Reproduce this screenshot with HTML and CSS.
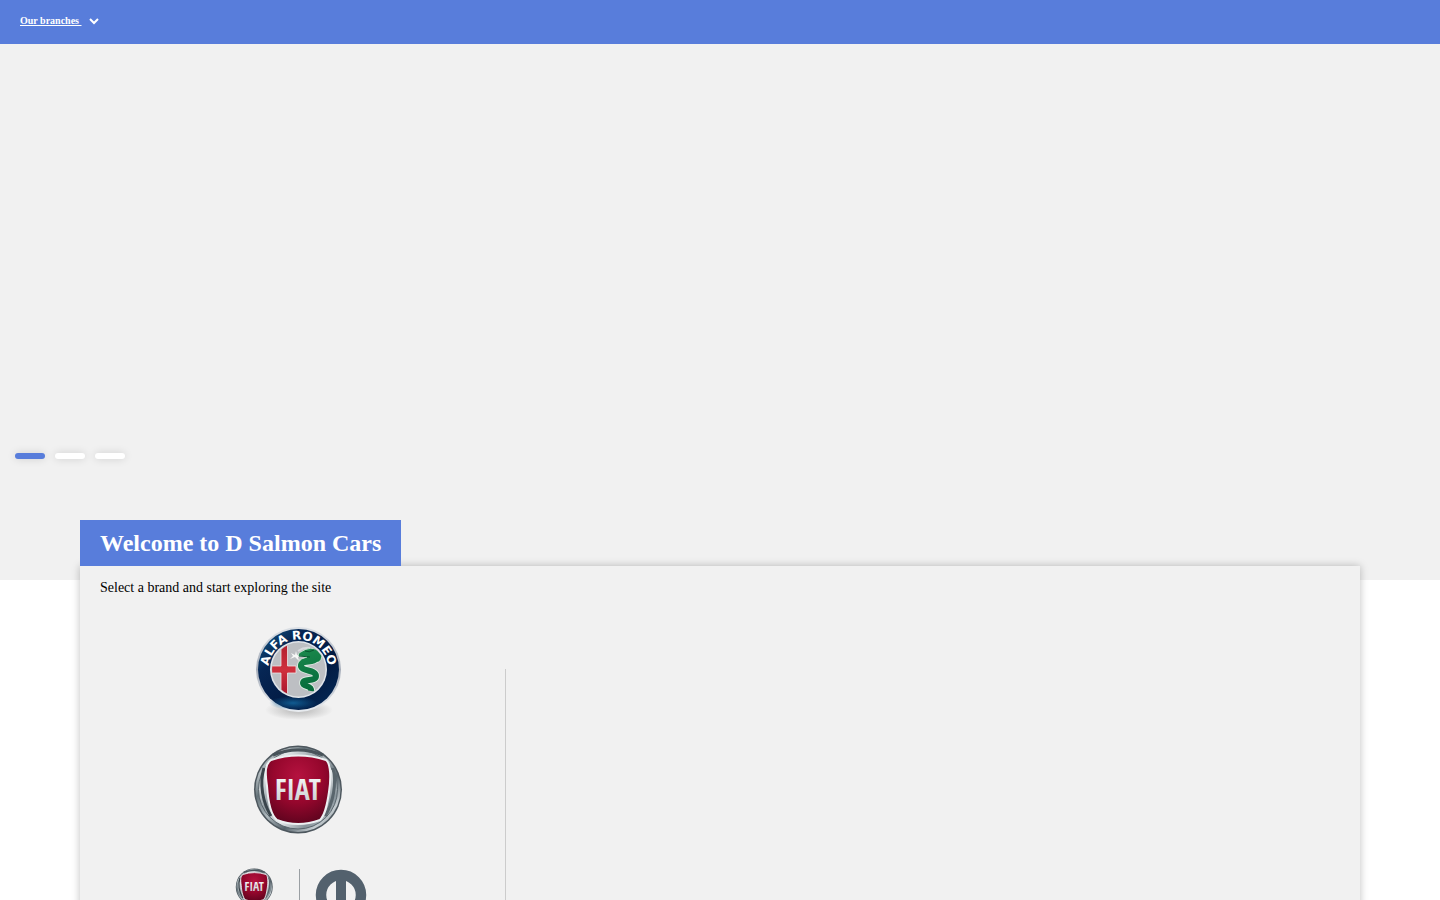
FILE: index.html
```html
<!DOCTYPE html>
<html lang="en">
<head>
<meta charset="utf-8">
<title>D Salmon Cars</title>
<link rel="stylesheet" href="styles.css">
</head>
<body>
<header class="topbar">
  <a class="branches" href="#branches"><span class="branches-label">Our branches&nbsp;</span><svg class="chevron" width="10" height="8" viewBox="0 0 10 8" aria-hidden="true"><path d="M1 2 5 6 9 2" fill="none" stroke="#fff" stroke-width="2"/></svg></a>
</header>
<section class="hero" aria-label="Promotions">
  <div class="slides">
    <button class="slide active" type="button" aria-label="Slide 1"></button>
    <button class="slide" type="button" aria-label="Slide 2"></button>
    <button class="slide" type="button" aria-label="Slide 3"></button>
  </div>
</section>
<main class="welcome">
  <h1 class="title">Welcome to D Salmon Cars</h1>
  <div class="panel">
    <p class="intro">Select a brand and start exploring the site</p>
    <div class="columns">
      <nav class="brands" aria-label="Brands">
        <a class="brand" href="#alfa">
          <svg width="110" height="110" viewBox="0 0 110 110" role="img" aria-label="Alfa Romeo">
            <defs>
              <linearGradient id="navy" x1="0" y1="0" x2="1" y2="1"><stop offset="0" stop-color="#05285a"/><stop offset=".12" stop-color="#0f4571"/><stop offset=".28" stop-color="#062654"/><stop offset=".65" stop-color="#021a42"/><stop offset="1" stop-color="#042b59"/></linearGradient>
              <radialGradient id="glow"><stop offset="0" stop-color="#12639a" stop-opacity=".9"/><stop offset="1" stop-color="#12639a" stop-opacity="0"/></radialGradient>
              <linearGradient id="silver" x1="0" y1="0" x2="0" y2="1"><stop offset="0" stop-color="#dde1e6"/><stop offset=".5" stop-color="#a5acb8"/><stop offset="1" stop-color="#e9edf1"/></linearGradient>
              <linearGradient id="red" x1="0" y1="0" x2="0" y2="1"><stop offset="0" stop-color="#b01e2d"/><stop offset=".5" stop-color="#cf303d"/><stop offset="1" stop-color="#a3112a"/></linearGradient>
              <linearGradient id="green" gradientUnits="userSpaceOnUse" x1="56" y1="32" x2="72" y2="78"><stop offset="0" stop-color="#1b8a4d"/><stop offset="1" stop-color="#04683a"/></linearGradient>
              <radialGradient id="shade"><stop offset=".3" stop-color="#aaa" stop-opacity=".6"/><stop offset="1" stop-color="#aaa" stop-opacity="0"/></radialGradient>
              <clipPath id="inner"><circle cx="53.500" cy="54.500" r="26.500"/></clipPath>
              <path id="ring" d="M35.500 78.500A30 30 0 1 1 71.500 78.500"/>
              <path id="serpent" d="M66 38Q75 39 71 44C68 48 57 45 56 50C55 57 71 54 71 61C71 67 58 63 58 68C58 72 67 70 66 76"/>
            </defs>
            <ellipse cx="54" cy="95" rx="34" ry="10" fill="url(#shade)"/>
            <circle cx="53.500" cy="54.500" r="42.500" fill="url(#silver)"/>
            <circle cx="53.500" cy="54.500" r="40.500" fill="url(#navy)"/>
            <ellipse cx="48" cy="88" rx="24" ry="7" fill="url(#glow)"/>
            <circle cx="53.500" cy="54.500" r="28.500" fill="#e0e4e9"/>
            <circle cx="53.500" cy="54.500" r="27" fill="#bdbfc3"/>
            <g clip-path="url(#inner)">
              <path d="M36 27v24H25v7h11v26h6.500V58H51v-7h-8.500V27z" fill="url(#red)" stroke="#eee4e4" stroke-width=".8"/>
              <path d="M46 38l4 2 1-4 1 4 6-1-5 3 1 4-4-4-5 2 3-3z" fill="#f7f7f7"/>
              <path d="M53 36q6-4 12-3" fill="none" stroke="#d8dadd" stroke-width="2"/>
              <use href="#serpent" fill="none" stroke="#dcebe1" stroke-width="7.800"/>
              <path d="M54 38Q67 29 75 37Q79 42 74 47L66 47 54 45 62 42 53 41z" fill="url(#green)" stroke="#dcebe1" stroke-width=".8"/>
              <use href="#serpent" fill="none" stroke="url(#green)" stroke-width="6"/>
              <path d="M54 41l11 1M60 36q4 2 9-1" fill="none" stroke="#0a5530"/>
            </g>
            <text class="alfa-word" text-anchor="middle"><textPath href="#ring" startOffset="50%">ALFA ROMEO</textPath></text>
          </svg>
        </a>
        <a class="brand" href="#fiat">
          <svg width="110" height="110" viewBox="0 0 110 110" role="img" aria-label="Fiat">
            <defs>
              <linearGradient id="chrome" x1="0" y1="0" x2="1" y2="1"><stop offset="0" stop-color="#59666d"/><stop offset=".18" stop-color="#b4bdc1"/><stop offset=".3" stop-color="#66747b"/><stop offset=".48" stop-color="#aeb8bd"/><stop offset=".65" stop-color="#56636b"/><stop offset=".82" stop-color="#c5cdd1"/><stop offset="1" stop-color="#505b62"/></linearGradient>
              <linearGradient id="rim" x1="0" y1="0" x2="1" y2="1"><stop offset="0" stop-color="#7d888e"/><stop offset=".2" stop-color="#e2e7e9"/><stop offset=".4" stop-color="#929da3"/><stop offset=".6" stop-color="#e6eaec"/><stop offset=".78" stop-color="#87939a"/><stop offset="1" stop-color="#d9dfe2"/></linearGradient>
              <radialGradient id="ruby" cx=".5" cy=".3" r=".7"><stop offset="0" stop-color="#b5123f"/><stop offset=".55" stop-color="#96072d"/><stop offset="1" stop-color="#61041f"/></radialGradient>
              <linearGradient id="steel" x1="0" y1="0" x2="0" y2="1"><stop offset="0" stop-color="#fff"/><stop offset="1" stop-color="#c2c7cc"/></linearGradient>
              <g id="fiat-badge">
                <circle cx="53" cy="54.500" r="44" fill="#4d575e"/>
                <circle cx="53" cy="54.500" r="42.500" fill="url(#chrome)"/>
                <circle cx="53" cy="54.500" r="39.500" fill="url(#rim)" stroke="#59656c"/>
                <path d="M28 20Q53 10 78 20" fill="none" stroke="#48535a" stroke-width="3"/>
                <path d="M19 33C14 49 18 68 26 81" fill="none" stroke="#3a454c" stroke-width="3"/>
                <path d="M88 33C92 49 88 68 80 81" fill="none" stroke="#59656c" stroke-width="3"/>
                <path d="M26 25Q53 16 81 25C86 29 86 44 84 57C82 71 80 80 75 85Q53 93 32 85C26 80 23 66 22 51C20 37 20 29 26 25z" fill="url(#ruby)" stroke="#edf0f2" stroke-width="2"/>
                <text x="53" y="65" class="fiat-word" text-anchor="middle">FIAT</text>
              </g>
            </defs>
            <use href="#fiat-badge"/>
          </svg>
        </a>
        <a class="brand" href="#professional">
          <svg width="160" height="80" viewBox="0 0 160 80" role="img" aria-label="Fiat and Mopar">
            <use href="#fiat-badge" transform="translate(12 9) scale(.42)"/>
            <path d="M79.500 14v58" stroke="#9a9fa3"/>
            <circle cx="121" cy="40" r="20" fill="none" stroke="#53616d" stroke-width="10.500"/>
            <path d="M116 18h10v44h-10z" fill="#53616d"/>
          </svg>
        </a>
      </nav>
      <div class="details"></div>
    </div>
  </div>
</main>
</body>
</html>
```
FILE: styles.css
```css
* { box-sizing: border-box; }

body {
  margin: 0;
  background: #fff;
  color: #000;
  font-family: "Liberation Serif", "Times New Roman", serif;
}

.topbar {
  display: flex;
  align-items: center;
  height: 44px;
  padding: 0 20px 2px;
  background: #587ddb;
}

.branches {
  display: flex;
  align-items: center;
  gap: 7px;
  color: #fff;
  font-size: 10px;
  font-weight: bold;
  line-height: 16px;
  text-decoration: none;
}

.branches-label { text-decoration: underline; }

.hero {
  display: flex;
  align-items: flex-end;
  height: 536px;
  padding: 0 15px 121px;
  background: #f1f1f1;
}

.slides {
  display: flex;
  gap: 10px;
}

.slide {
  width: 30px;
  height: 6px;
  padding: 0;
  border: 0;
  border-radius: 3px;
  background: #fff;
  box-shadow: 0 0 8px rgba(0, 0, 0, 0.15);
}

.slide.active { background: #587ddb; }

.welcome {
  position: relative;
  margin: -60px 80px 0;
}

.title {
  position: relative;
  z-index: 1;
  width: fit-content;
  margin: 0;
  padding: 8px 20px;
  background: #587ddb;
  color: #fff;
  font-size: 24px;
  line-height: 30px;
}

.panel {
  padding: 12px 20px 40px;
  background: #f1f1f1;
  box-shadow: 0 0 8px rgba(0, 0, 0, 0.25);
}

.intro {
  margin: 0 0 17px;
  font-size: 14px;
  line-height: 20px;
}

.columns {
  display: grid;
  grid-template-columns: minmax(0, 400px) 1fr;
  gap: 5px;
}

.brands {
  display: flex;
  flex-direction: column;
  align-items: center;
  gap: 10px;
}

.brand svg { display: block; }

.details {
  margin-top: 54px;
  border-left: 1px solid #ccc;
}

.alfa-word {
  fill: #fff;
  font-family: "DejaVu Sans", sans-serif;
  font-size: 12px;
  font-weight: bold;
}

.fiat-word {
  fill: url(#steel);
  font-family: "Open Sans Condensed", "Roboto Condensed", "Liberation Sans", sans-serif;
  font-size: 28px;
  font-weight: bold;
}
```
